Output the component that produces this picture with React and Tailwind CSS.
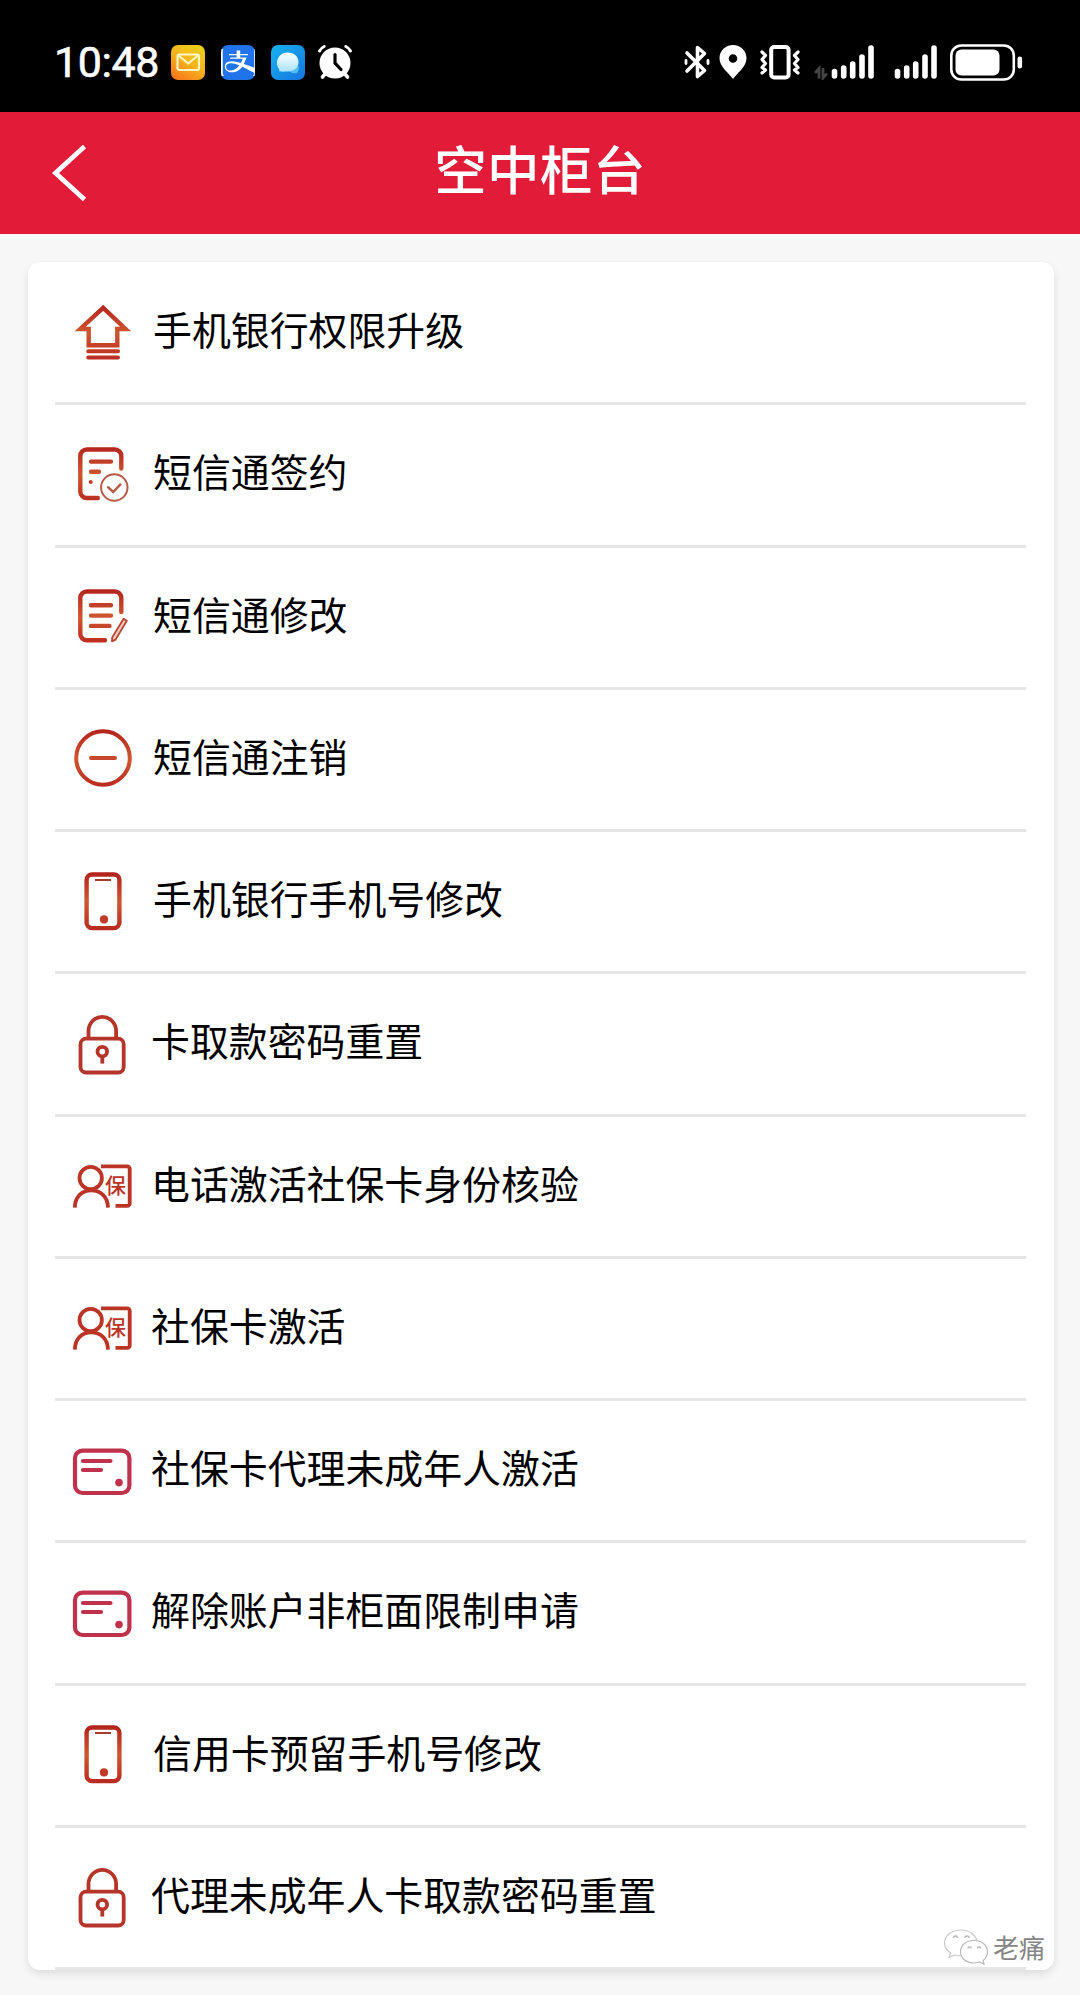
import React from "react";
import { FaAlipay } from "react-icons/fa";

const Gradient = ({ id }) => (
  <defs>
    <linearGradient id={id} gradientUnits="userSpaceOnUse" x1="0" y1="4" x2="0" y2="62">
      <stop offset="0" stopColor="#b3221c" />
      <stop offset="0.5" stopColor="#cf5630" />
      <stop offset="1" stopColor="#b8281f" />
    </linearGradient>
  </defs>
);

const iconClass = "block h-16 w-16 shrink-0 -mt-0.5";

const UpgradeIcon = () => (
  <svg viewBox="0 0 64 64" className={iconClass} fill="none" stroke="url(#g-up)" strokeWidth="4.4">
    <Gradient id="g-up" />
    <path d="M33.2 7.8 55.6 29H47.3V45.2H18.7V29H10.2Z" />
    <path d="M18.200 51.200 48 51.300M18.200 57.400 48 57.500" strokeLinecap="round" strokeWidth="4" />
  </svg>
);

const SignIcon = () => (
  <svg viewBox="0 0 64 64" className={iconClass} fill="none" stroke="url(#g-sign)" strokeWidth="4.4" strokeLinecap="round">
    <Gradient id="g-sign" />
    <path d="M51.3 26.5V14a6.5 6.5 0 0 0-6.5-6.5H16.8a6.5 6.5 0 0 0-6.5 6.5V49.5a6.5 6.5 0 0 0 6.5 6.5H27.8" />
    <path d="M21 19.6H41M21 29.8H29" />
    <circle cx="20.7" cy="40" r="2" fill="#c23a28" stroke="none" />
    <circle cx="44.3" cy="45.5" r="13.2" stroke="#b85a48" strokeWidth="2" />
    <path d="M38 45.2 43.2 50 50.4 42.4" stroke="#b85a48" strokeWidth="2.4" />
  </svg>
);

const EditIcon = () => (
  <svg viewBox="0 0 64 64" className={iconClass} fill="none" stroke="url(#g-edit)" strokeWidth="4.4" strokeLinecap="round">
    <Gradient id="g-edit" />
    <path d="M51.3 28V14a6.5 6.5 0 0 0-6.5-6.5H16.8a6.5 6.5 0 0 0-6.5 6.5V49.8a6.5 6.5 0 0 0 6.5 6.5H35" />
    <path d="M21 21.3H41M21 31.6H41M21 41.9H39.5" />
    <path d="M53.6 34.8 56.8 36.8 45.6 55.6 42 57.4 42.2 53.4Z" fill="#f3c9bd" stroke="#b8452f" strokeWidth="1.8" strokeLinejoin="round" />
  </svg>
);

const CancelIcon = () => (
  <svg viewBox="0 0 64 64" className={iconClass} fill="none" stroke="url(#g-cancel)" strokeWidth="4" strokeLinecap="round">
    <Gradient id="g-cancel" />
    <circle cx="33" cy="32" r="26.8" />
    <path d="M21 32.1 45 32" stroke="#c8482e" />
  </svg>
);

const PhoneIcon = () => (
  <svg viewBox="0 0 64 64" className={iconClass} fill="none" stroke="url(#g-phone)" strokeWidth="4.4">
    <Gradient id="g-phone" />
    <rect x="16.6" y="5.5" width="32.8" height="53.6" rx="5.5" />
    <path d="M25 11.1 41 11" stroke="#a83a2c" strokeWidth="2" />
    <circle cx="34" cy="50.4" r="4.1" fill="#c23a28" stroke="none" />
  </svg>
);

const LockIcon = () => (
  <svg viewBox="0 0 64 64" className={iconClass} fill="none" stroke="#b6352a" strokeWidth="3.8">
    <path d="M18.5 27V20a13.8 14.2 0 0 1 27.6 0V27" />
    <rect x="10.5" y="27.7" width="43.2" height="33.8" rx="5.5" />
    <circle cx="32.3" cy="40.6" r="4.8" />
    <path d="M32.3 45.5V52.6" />
  </svg>
);

const InsuredIcon = () => (
  <svg viewBox="0 0 64 64" className={iconClass} fill="none" stroke="#bb3426" strokeWidth="3.8">
    <circle cx="20.7" cy="25" r="11.2" />
    <path d="M4.8 54.6C5 43.5 12 37.4 21.2 37.4S37.8 43.5 38 54.6" />
    <path d="M31 13.4H57.2a2.5 2.5 0 0 1 2.5 2.5V50.4a2.5 2.5 0 0 1-2.5 2.5H45.5" />
    <text
      x="45.600"
      y="39.600"
      textAnchor="middle"
      fill="#bb3426"
      stroke="none"
      className="font-['Noto_Sans_CJK_SC',sans-serif] text-[21px] font-medium"
    >
      保
    </text>
  </svg>
);

const CardIcon = () => (
  <svg viewBox="0 0 64 64" className={iconClass} fill="none" stroke="#c0324b" strokeWidth="4.200" strokeLinecap="round">
    <rect x="5" y="12.6" width="54.4" height="42.4" rx="7.5" />
    <path d="M13 23H40.5M13 32H31" />
    <circle cx="49" cy="44.6" r="3.8" fill="#c0324b" stroke="none" />
  </svg>
);

const items = [
  { label: "手机银行权限升级", icon: UpgradeIcon, gap: "ml-[19px]" },
  { label: "短信通签约", icon: SignIcon, gap: "ml-[19px]" },
  { label: "短信通修改", icon: EditIcon, gap: "ml-[19px]" },
  { label: "短信通注销", icon: CancelIcon, gap: "ml-[19px]" },
  { label: "手机银行手机号修改", icon: PhoneIcon, gap: "ml-[19px]" },
  { label: "卡取款密码重置", icon: LockIcon, gap: "ml-[17px]" },
  { label: "电话激活社保卡身份核验", icon: InsuredIcon, gap: "ml-[17px]" },
  { label: "社保卡激活", icon: InsuredIcon, gap: "ml-[17px]" },
  { label: "社保卡代理未成年人激活", icon: CardIcon, gap: "ml-[17px]" },
  { label: "解除账户非柜面限制申请", icon: CardIcon, gap: "ml-[17px]" },
  { label: "信用卡预留手机号修改", icon: PhoneIcon, gap: "ml-[19px]" },
  { label: "代理未成年人卡取款密码重置", icon: LockIcon, gap: "ml-[17px]" },
];

const Signal = () => (
  <svg viewBox="0 0 44 36" className="block h-9 w-11" stroke="#fff" strokeWidth="5.6" strokeLinecap="round">
    <path d="M3.5 27.5V32M12.7 24V32M21.7 20V32M31 13V32M40 4V32" />
  </svg>
);

const StatusBar = () => (
  <div className="flex h-28 items-center bg-black pt-3 pl-[54px] text-white">
    <div className="w-[117px] font-['Roboto',sans-serif] text-[43px] leading-none tracking-[-0.4px] [-webkit-text-stroke:0.6px_#fff]">10:48</div>
    <svg viewBox="0 0 34 35" className="block h-[35px] w-[34px]">
      <defs>
        <linearGradient id="mail" x1="0.8" y1="0" x2="0.2" y2="1">
          <stop offset="0" stopColor="#ecd01c" />
          <stop offset="0.5" stopColor="#f5b31c" />
          <stop offset="1" stopColor="#f8761d" />
        </linearGradient>
      </defs>
      <rect width="34" height="35" rx="7" fill="url(#mail)" />
      <path d="M8.5 9.5H26a2 2 0 0 1 2 2V23a2 2 0 0 1-2 2H8.5a2 2 0 0 1-2-2V11.5a2 2 0 0 1 2-2ZM7.5 10.5 17.2 18.5 27 10.5" fill="none" stroke="#fff6c4" strokeWidth="2.2" strokeLinejoin="round" />
    </svg>
    <div className="ml-4 flex h-[35px] w-[34px] items-center justify-center overflow-hidden rounded-[7px] bg-[#2173ea]">
      <div className="flex h-[27px] w-[34px] items-center justify-center bg-white">
        <FaAlipay className="h-9 w-[35px] shrink-0 text-[#2173ea]" />
      </div>
    </div>
    <svg viewBox="0 0 34 35" className="ml-4 block h-[35px] w-[34px]">
      <defs>
        <linearGradient id="msg" x1="0" y1="0" x2="1" y2="1">
          <stop offset="0" stopColor="#17b4ee" />
          <stop offset="1" stopColor="#1673e0" />
        </linearGradient>
        <linearGradient id="bubble" x1="0" y1="0" x2="0" y2="1">
          <stop offset="0" stopColor="#fff" />
          <stop offset="1" stopColor="#a9e3fb" />
        </linearGradient>
      </defs>
      <rect width="34" height="35" rx="7" fill="url(#msg)" />
      <path d="M27 20Q29 24 26 28 21 29 18 26Z" fill="#54bdf4" />
      <path d="M16.5 7.5C23 7.5 27.5 11.5 27.5 17S23 26.5 16.5 26.5C14.5 26.5 12 27 8 26.3 9 24.5 8 24 7 22.5 3.5 15 9 7.5 16.5 7.5Z" fill="url(#bubble)" />
    </svg>
    <svg viewBox="0 0 36 36" className="ml-3 block h-9 w-9" fill="none" stroke="#fff" strokeLinecap="round">
      <circle cx="18" cy="19" r="15.5" fill="#fff" stroke="none" />
      <path d="M2.5 7Q4 4 7.2 2.5M33.5 7Q32 4 28.8 2.5" strokeWidth="3" />
      <path d="M8 30 5.5 33M28 30 30.5 33" strokeWidth="3.6" />
      <path d="M18 10.5V19L24 25.5" stroke="#000" strokeWidth="3.2" />
    </svg>

    <svg viewBox="0 0 26 36" className="ml-[331px] block h-9 w-[26px]" fill="none" stroke="#fff" strokeWidth="3.6" strokeLinecap="round" strokeLinejoin="round">
      <path d="M3 9 20.5 26.5 13.5 32.5V3.5L20.5 9.5 3 27" />
      <path d="M2 16.5V19.5M24 16.5V19.5" strokeWidth="2.8" />
    </svg>
    <svg viewBox="0 0 28 36" className="ml-[9px] block h-9 w-7">
      <path d="M14 1C6.5 1 .5 6.8 .5 14.2.5 23 10.5 29.5 14 35 17.5 29.5 27.5 23 27.5 14.2 27.5 6.8 21.5 1 14 1ZM14 10.2a4.3 4.3 0 1 1 0 8.6 4.3 4.3 0 0 1 0-8.6Z" fill="#fff" fillRule="evenodd" />
    </svg>
    <svg viewBox="0 0 42 36" className="ml-3 block h-9 w-[42px]" fill="none" stroke="#fff" strokeWidth="3.2" strokeLinecap="round" strokeLinejoin="round">
      <rect x="12.2" y="3" width="17.4" height="30.5" rx="3" strokeWidth="4" />
      <path d="M3 8 6.5 11.5 3 15.5 6.5 19.5 3 23.5 6.5 26 3 29M39 8 35.5 11.5 39 15.5 35.5 19.5 39 23.5 35.5 26 39 29" />
    </svg>
    <svg viewBox="0 0 14 36" className="ml-[13px] block h-9 w-3.5" fill="none" stroke="#444" strokeWidth="2.8">
      <path d="M1 29 5 24.5V34.5M9 24V34L13 29.5" />
    </svg>
    <div className="ml-[3px]">
      <Signal />
    </div>
    <div className="ml-[19px]">
      <Signal />
    </div>
    <svg viewBox="0 0 74 37" className="ml-3 block h-[37px] w-[74px]">
      <rect x="1.3" y="1.5" width="62.5" height="34" rx="10" fill="none" stroke="#fff" strokeWidth="2.6" />
      <rect x="5.5" y="5.5" width="44" height="26" rx="6" fill="#fff" />
      <rect x="67.5" y="12.5" width="4.6" height="12" rx="2.3" fill="#fff" />
    </svg>
  </div>
);

const Header = () => (
  <div className="flex h-[122px] items-center bg-[#e21b39] px-[50px] text-white">
    <svg viewBox="0 0 37 60" className="-mt-0.5 block h-[60px] w-[37px]" fill="none" stroke="#fff" strokeWidth="4.8">
      <path d="M34.500 4.500 5.500 31 34.500 57.500" />
    </svg>
    <div className="mr-[37px] -mt-3 flex-1 text-center text-[52.5px] leading-none font-medium tracking-[0.4px]">空中柜台</div>
  </div>
);

const Row = ({ item }) => {
  const Icon = item.icon;
  return (
    <div className="flex flex-1 items-center border-b-3 border-[#e6e6e6] pl-[15px]">
      <Icon />
      <span className={`-mt-2 text-[38.9px] leading-none whitespace-nowrap text-black ${item.gap}`}>{item.label}</span>
    </div>
  );
};

const Watermark = () => (
  <div className="absolute right-[9px] bottom-[5px] flex items-center">
    <svg viewBox="0 0 46 36" className="block h-9 w-[46px]" fill="#fff" stroke="#b8b8b8" strokeWidth="1.2">
      <path d="M18 1C8.5 1 1.5 6.5 1.5 14 1.5 18.5 4 21.5 7.5 24L6 28.5 11.5 26C22 28.5 34 24 34 14 34 6.5 27 1 18 1Z" stroke="#c9c9c9" />
      <path d="M31 11.5C23 11.5 17.5 16.5 17.5 22.8S23 34 31 34C33 34 35 33.6 36.5 33L41 35.2 40 31.5C43 29.5 44.5 26.5 44.5 22.8 44.5 16.5 39 11.5 31 11.5Z" />
      <path d="M10.5 9a2 2 0 0 1 4 0M22 9a2 2 0 0 1 4 0M25 19.5a1.6 1.6 0 0 1 3.2 0M34.5 19.5a1.6 1.6 0 0 1 3.2 0" fill="none" strokeWidth="1.5" />
    </svg>
    <span className="ml-1 text-[26px] leading-none text-[#858585]">老痛</span>
  </div>
);

const App = () => {
  return (
    <div className="flex h-[1995px] w-[1080px] flex-col overflow-hidden bg-[#f7f7f7] font-['Noto_Sans_CJK_SC',sans-serif]">
      <StatusBar />
      <Header />
      <div className="relative mt-7 ml-7 flex h-[1708px] w-[1026px] flex-col rounded-[12px] bg-white pt-px pr-7 pl-[27px] shadow-[0_4px_8px_rgba(0,0,0,0.1)]">
        {items.map((item) => (
          <Row key={item.label} item={item} />
        ))}
        <Watermark />
      </div>
    </div>
  );
};

export default App;
